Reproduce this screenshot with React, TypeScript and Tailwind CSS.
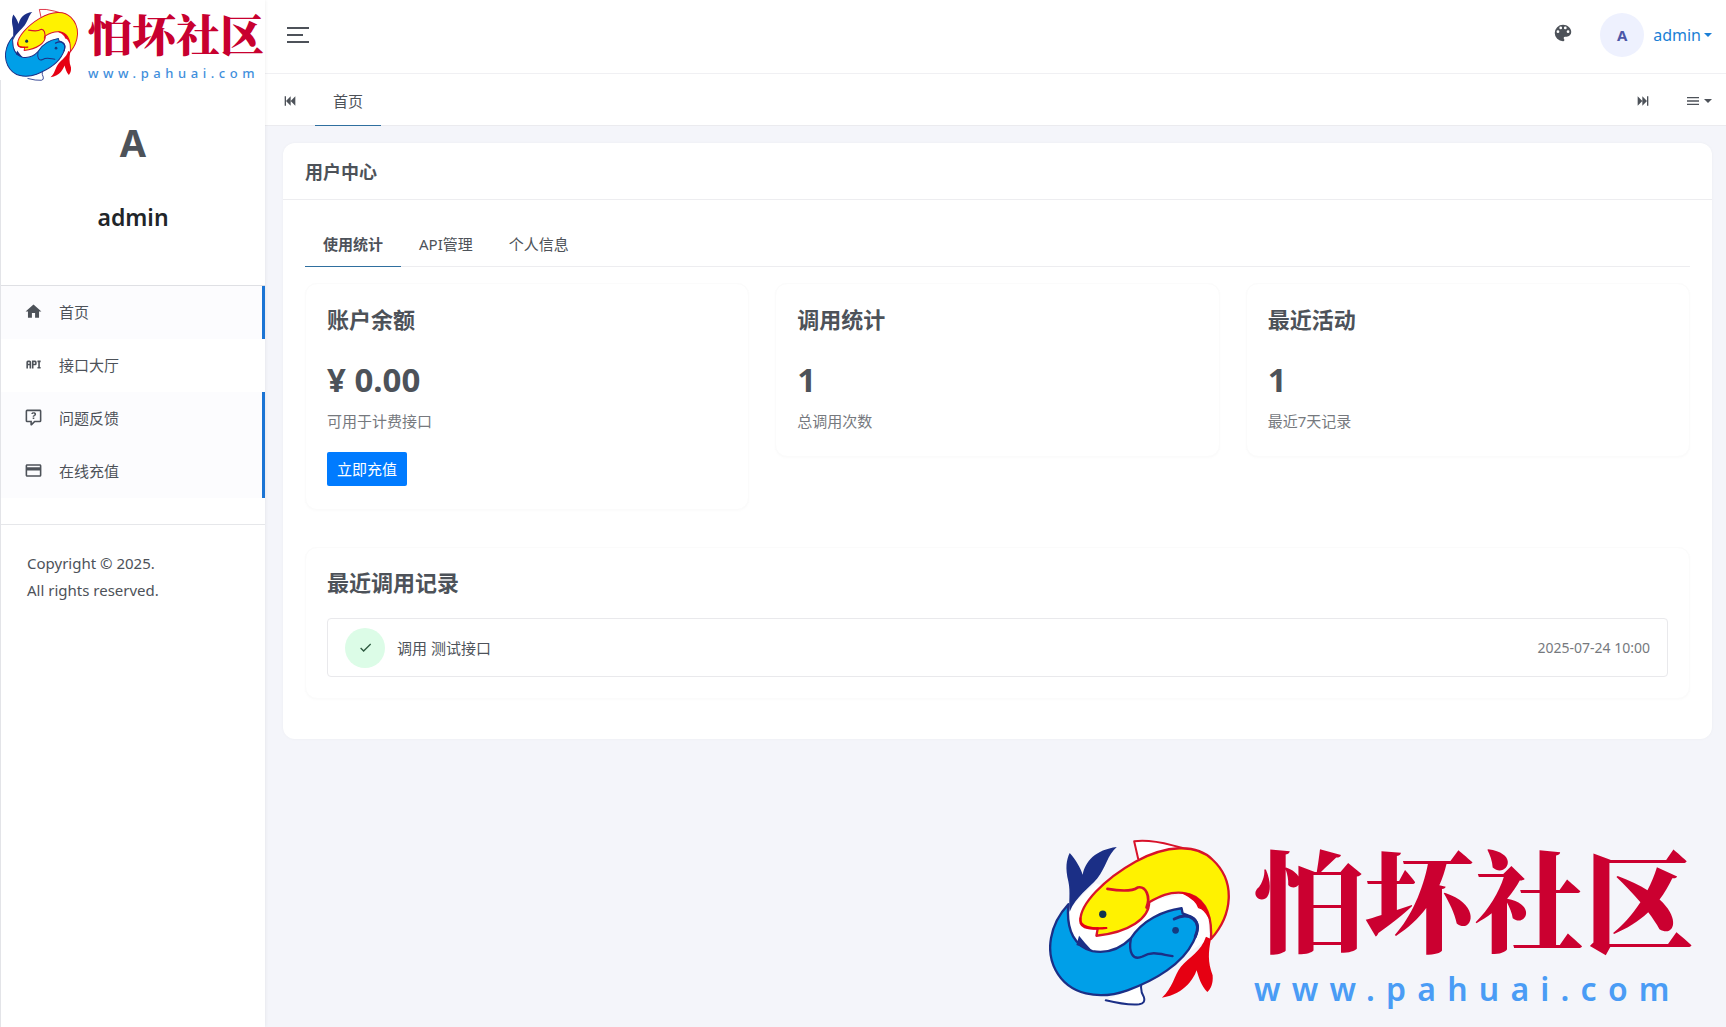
import React from "react";

const icons = {
  home: "M10,20V14H14V20H19V12H22L12,3L2,12H5V20H10Z",
  api: "M7 7H5A2 2 0 0 0 3 9V17H5V13H7V17H9V9A2 2 0 0 0 7 7M7 11H5V9H7M14 7H10V17H12V13H14A2 2 0 0 0 16 11V9A2 2 0 0 0 14 7M14 11H12V9H14M20 9V15H21V17H17V15H18V9H17V7H21V9Z",
  question:
    "M4,2A2,2 0 0,0 2,4V16A2,2 0 0,0 4,18H8V21A1,1 0 0,0 9,22H9.5V22C9.75,22 10,21.9 10.2,21.71L13.9,18H20A2,2 0 0,0 22,16V4C22,2.89 21.1,2 20,2H4M4,4H20V16H13.08L10,19.08V16H4V4M12.19,5.5C11.3,5.5 10.59,5.68 10.05,6.04C9.5,6.4 9.22,7 9.27,7.69H11.24C11.24,7.41 11.34,7.2 11.5,7.06C11.7,6.92 11.92,6.85 12.19,6.85C12.5,6.85 12.77,6.93 12.95,7.11C13.13,7.28 13.22,7.5 13.22,7.8C13.22,8.08 13.14,8.33 13,8.54C12.83,8.76 12.62,8.94 12.36,9.08C11.84,9.4 11.5,9.68 11.29,9.92C11.1,10.16 11,10.5 11,11H13C13,10.72 13.05,10.5 13.14,10.32C13.23,10.15 13.4,10 13.66,9.85C14.12,9.64 14.5,9.36 14.79,9C15.08,8.63 15.23,8.24 15.23,7.8C15.23,7.1 14.96,6.54 14.42,6.12C13.88,5.71 13.13,5.5 12.19,5.5M11,12V14H13V12H11Z",
  card: "M20,8H4V6H20M20,18H4V12H20M20,4H4C2.89,4 2,4.89 2,6V18C2,19.1 2.9,20 4,20H20A2,2 0 0,0 22,18V6C22,4.89 21.1,4 20,4Z",
  palette:
    "M17.5,12A1.5,1.5 0 0,1 16,10.5A1.5,1.5 0 0,1 17.5,9A1.5,1.5 0 0,1 19,10.5A1.5,1.5 0 0,1 17.5,12M14.5,8A1.5,1.5 0 0,1 13,6.5A1.5,1.5 0 0,1 14.5,5A1.5,1.5 0 0,1 16,6.5A1.5,1.5 0 0,1 14.5,8M9.5,8A1.5,1.5 0 0,1 8,6.5A1.5,1.5 0 0,1 9.5,5A1.5,1.5 0 0,1 11,6.5A1.5,1.5 0 0,1 9.5,8M6.5,12A1.5,1.5 0 0,1 5,10.5A1.5,1.5 0 0,1 6.5,9A1.5,1.5 0 0,1 8,10.5A1.5,1.5 0 0,1 6.5,12M12,3A9,9 0 0,0 3,12A9,9 0 0,0 12,21A1.5,1.5 0 0,0 13.5,19.5C13.5,19.11 13.35,18.76 13.11,18.5C12.88,18.23 12.73,17.88 12.73,17.5A1.5,1.5 0 0,1 14.23,16H16A5,5 0 0,0 21,11C21,6.58 16.97,3 12,3Z",
  back: "M20,5V19L13,12M6,5V19H4V5M13,5V19L6,12",
  forward: "M4,5V19L11,12M18,5V19H20V5M11,5V19L18,12",
  menu: "M3,6H21V8H3V6M3,11H21V13H3V11M3,16H21V18H3V16Z",
  check: "M21,7L9,19L3.5,13.5L4.91,12.09L9,16.17L19.59,5.59L21,7Z",
  caret: "M0,6H24L12,18Z",
};

function Icon({ name, className }: { name: keyof typeof icons; className: string }) {
  return (
    <svg viewBox="0 0 24 24" className={className} fill="currentColor" aria-hidden="true">
      <path d={icons[name]} />
    </svg>
  );
}

function Fish({ className }: { className: string }) {
  return (
    <svg viewBox="30 30 542 502" preserveAspectRatio="none" className={className} aria-hidden="true" strokeLinejoin="round" strokeLinecap="round">
      {/* white channel between the two fish */}
      <path d="M170 165C140 190 110 220 92 245C70 300 100 350 160 372L300 400L420 390L510 330L505 240L440 195L330 220Z" fill="#fff" />
      {/* yellow fish */}
      <path d="M297 92L285 40Q330 34 400 52L430 60" fill="#fff" stroke="#d8132a" strokeWidth="6" />
      <path d="M125 285C115 230 200 150 290 100C380 52 470 45 520 95C590 160 580 260 515 332C520 250 490 200 430 194C390 190 360 205 330 222C330 270 270 312 172 322L176 300C150 302 130 298 125 285Z" fill="#fff200" stroke="#d8132a" strokeWidth="7" />
      <path d="M205 182C240 188 275 192 295 178C320 172 335 205 322 238" fill="none" stroke="#d8132a" strokeWidth="8" />
      <path d="M124 270C120 296 160 304 202 299L176 300C145 303 122 295 124 270Z" fill="#e60012" stroke="#e60012" strokeWidth="6" />
      <path d="M430 194C470 198 500 225 510 270C500 250 490 240 478 238C475 225 465 212 430 194Z" fill="#e60012" stroke="#e60012" strokeWidth="4" />
      <path d="M500 325L515 332C507 370 505 400 520 440C522 465 515 480 504 490C485 470 478 445 472 425C465 445 440 495 368 507C400 480 405 440 425 415C450 385 485 370 500 325Z" fill="#e60012" />
      {/* blue fish */}
      <path d="M200 515Q260 530 300 527Q320 524 314 505Q304 490 306 470" fill="#fff" stroke="#1b2f86" strokeWidth="6" />
      <path d="M88 228C30 290 20 370 50 425C90 500 180 515 265 485C350 455 430 405 462 340C482 300 478 275 455 265L430 255L427 240C370 248 310 275 275 330C240 365 200 375 160 368C110 355 80 310 88 228Z" fill="#009fe8" stroke="#1b2f86" strokeWidth="7" />
      <path d="M405 272C450 250 490 275 468 325" fill="none" stroke="#1b2f86" strokeWidth="9" />
      <path d="M275 332C268 370 280 398 310 384C340 366 365 378 400 383" fill="none" stroke="#1b2f86" strokeWidth="7" />
      <path d="M120 322L112 350L160 368Q138 345 120 322Z" fill="#1b2f86" />
      <path d="M92 75C110 95 125 120 131 140C138 100 170 65 233 57C205 80 200 120 175 150C150 180 110 205 92 250C88 230 95 190 88 160C78 120 82 95 92 75Z" fill="#1b2f86" />
      <circle cx="191" cy="258" r="11" fill="#10324f" />
      <circle cx="409" cy="306" r="10" fill="#143a80" />
    </svg>
  );
}

const nav: { label: string; icon: keyof typeof icons; active: boolean }[] = [
  { label: "首页", icon: "home", active: true },
  { label: "接口大厅", icon: "api", active: false },
  { label: "问题反馈", icon: "question", active: true },
  { label: "在线充值", icon: "card", active: true },
];

const stats = [
  { title: "账户余额", value: "¥ 0.00", note: "可用于计费接口", action: "立即充值" },
  { title: "调用统计", value: "1", note: "总调用次数" },
  { title: "最近活动", value: "1", note: "最近7天记录" },
];

const panel = "rounded-xl border border-[#fbfbfb] bg-white px-[21px] shadow-[0_1px_3px_rgba(0,0,0,0.02)]";

export default function App() {
  return (
    <div className="flex min-h-screen bg-[#f4f5fa] font-['Noto_Sans','Noto_Sans_CJK_SC',sans-serif] text-[15px] leading-6 text-[#4d5259]">
      <aside className="z-10 flex w-[265px] shrink-0 flex-col bg-white shadow-[0_0_4px_rgba(0,0,0,0.08)]">
        <a href="#" className="flex h-20 items-start gap-[10px] pt-2 pl-[5px]">
          <Fish className="h-[73px] w-[73px] shrink-0" />
          <span className="flex flex-col whitespace-nowrap">
            <span className="font-['Noto_Serif_CJK_SC','Noto_Sans_CJK_SC',serif] text-[44px] leading-[50px] font-black text-[#c8002f]">怕坏社区</span>
            <span className="mt-[5px] text-[13px] leading-5 font-medium tracking-[0.35em] text-[#3f8fdc]">www.pahuai.com</span>
          </span>
        </a>
        <div className="flex grow flex-col border-l border-[#e3e4e8]">
          <div className="flex h-[206px] flex-col items-center gap-[34px] border-b border-[#dfe0e4] pt-[39px]">
            <div className="text-[38px] leading-[46px] font-bold">A</div>
            <div className="text-[23px] leading-9 font-semibold text-[#212529]">admin</div>
          </div>
          <nav className="flex flex-col">
            {nav.map((n) => (
              <a
                key={n.label}
                href="#"
                className={
                  n.active
                    ? "flex h-[53px] items-center gap-4 border-r-3 border-[#1b74d4] bg-[#fcfcfe] pb-0.5 pl-[23px]"
                    : "flex h-[53px] items-center gap-4 pb-0.5 pl-[23px]"
                }
              >
                <Icon name={n.icon} className="size-[19px]" />
                {n.label}
              </a>
            ))}
          </nav>
          <p className="mt-[26px] border-t border-[#e6e7ea] pt-[25px] pl-[26px] leading-[27px]">
            Copyright © 2025.
            <br />
            All rights reserved.
          </p>
        </div>
      </aside>

      <div className="flex min-w-0 grow flex-col">
        <header className="flex h-[74px] items-center justify-between border-b border-[#f0f0f3] bg-white pr-[14px] pb-[3px] pl-[22px]">
          <button type="button" aria-label="切换菜单" className="flex flex-col gap-[5px]">
            <span className="h-0.5 w-[22px] bg-[#4d5259]" />
            <span className="h-0.5 w-4 bg-[#4d5259]" />
            <span className="h-0.5 w-[22px] bg-[#4d5259]" />
          </button>
          <div className="flex items-center">
            <button type="button" aria-label="主题" className="mr-[26px] pb-1">
              <Icon name="palette" className="size-[22px]" />
            </button>
            <button type="button" className="flex items-center gap-[9px] text-base text-[#1b7fd6]">
              <span className="flex size-11 items-center justify-center rounded-full bg-[#eef1fe] text-[15px] font-bold text-[#4c57a8]">A</span>
              <span className="flex items-center gap-[3px]">
                admin
                <Icon name="caret" className="size-2" />
              </span>
            </button>
          </div>
        </header>

        <div className="flex h-[52px] items-center justify-between border-b border-[#ebebef] bg-white pr-[14px] pl-[17px]">
          <div className="flex h-full items-center gap-[17px]">
            <button type="button" aria-label="向左" className="pt-0.5">
              <Icon name="back" className="size-4" />
            </button>
            <a href="#" className="-mb-px flex h-[52px] items-center border-b border-[#2f6f9f] px-[18px] pt-0.5">首页</a>
          </div>
          <div className="flex items-center gap-[34px] pt-0.5">
            <button type="button" aria-label="向右">
              <Icon name="forward" className="size-4" />
            </button>
            <button type="button" aria-label="标签操作" className="flex items-center gap-[3px]">
              <Icon name="menu" className="size-4" />
              <Icon name="caret" className="size-2" />
            </button>
          </div>
        </div>

        <main className="flex grow flex-col pt-[17px] pr-[14px] pb-[14px] pl-[18px]">
          <section className="rounded-xl bg-white shadow-[0_0_3px_rgba(0,0,0,0.04)]">
            <h1 className="border-b border-[#ededf0] px-[22px] pt-[17px] pb-[14px] text-[18px] leading-[25px] font-bold">用户中心</h1>
            <div className="px-[22px] pt-[21px] pb-[40px]">
              <div role="tablist" className="flex border-b border-[#ededf0]">
                <button type="button" role="tab" aria-selected="true" className="-mb-px h-[46px] border-b border-[#2f6f9f] px-[18px] font-semibold">使用统计</button>
                <button type="button" role="tab" aria-selected="false" className="h-[45px] px-[18px]">API管理</button>
                <button type="button" role="tab" aria-selected="false" className="h-[45px] px-[18px]">个人信息</button>
              </div>

              <div className="mt-4 grid grid-cols-3 items-start gap-[26px]">
                {stats.map((s) => (
                  <section key={s.title} className={`${panel} pt-[19px] pb-[23px]`}>
                    <h2 className="text-[22px] leading-8 font-bold">{s.title}</h2>
                    <p className="mt-[21px] text-[33px] leading-[48px] font-bold">{s.value}</p>
                    <p className="mt-[5px] text-[#76797e]">{s.note}</p>
                    {s.action && (
                      <button type="button" className="mt-[19px] flex h-[34px] items-center rounded-xs bg-[#007bff] px-[10px] text-white">
                        {s.action}
                      </button>
                    )}
                  </section>
                ))}
              </div>

              <section className={`${panel} mt-[37px] pt-[18px] pb-[21px]`}>
                <h2 className="text-[22px] leading-8 font-bold">最近调用记录</h2>
                <ul className="mt-5">
                  <li className="flex h-[59px] items-center rounded border border-[#e9e9ec] px-[17px]">
                    <span className="mr-3 flex size-10 items-center justify-center rounded-full bg-[#dcfce7] text-[#2f5a41]">
                      <Icon name="check" className="size-[15px]" />
                    </span>
                    调用 测试接口
                    <time className="ml-auto text-[14px] text-[#76797e]">2025-07-24 10:00</time>
                  </li>
                </ul>
              </section>
            </div>
          </section>

          <a href="#" className="mt-auto mr-[18px] flex items-start gap-6 self-end">
            <Fish className="mt-1 h-[168px] w-[181px] shrink-0" />
            <span className="-mr-[10px] flex flex-col whitespace-nowrap">
              <span className="pr-[10px] font-['Noto_Serif_CJK_SC','Noto_Sans_CJK_SC',serif] text-[110px] leading-[124px] font-black text-[#cb0030]">怕坏社区</span>
              <span className="mt-[7px] text-[32px] leading-[48px] font-semibold tracking-[0.35em] text-[#4a9cf5]">www.pahuai.com</span>
            </span>
          </a>
        </main>
      </div>
    </div>
  );
}
